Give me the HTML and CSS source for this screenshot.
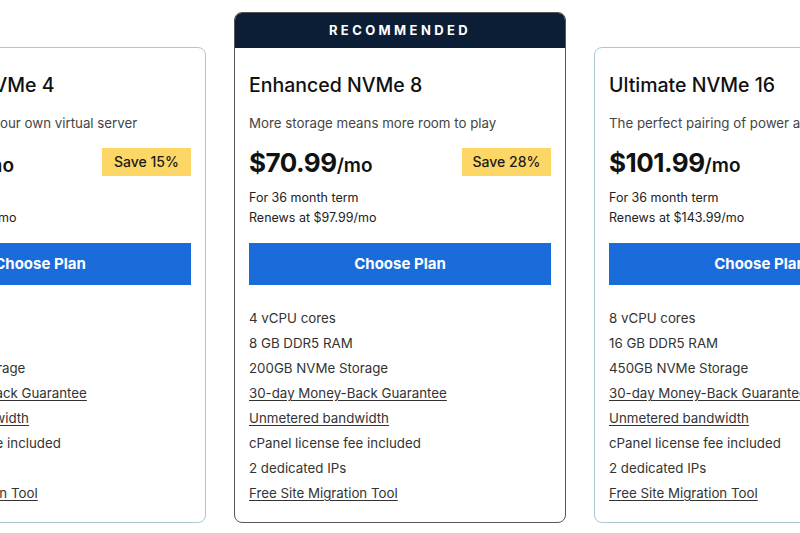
FILE: index.html
```html
<!DOCTYPE html>
<html>
<head>
<meta charset="utf-8">
<link rel="stylesheet" href="styles.css">
</head>
<body>
<div class="plans">
  <div class="card side">
    <div class="body">
      <h2 class="title">Standard NVMe 4</h2>
      <p class="sub">Get started with your own virtual server</p>
      <div class="price-row">
        <div class="price">$52.99<span class="per">/mo</span></div>
        <div class="save">Save 15%</div>
      </div>
      <p class="term">For 36 month term</p>
      <p class="term">Renews at $61.99/mo</p>
      <a class="btn">Choose Plan</a>
      <ul class="features">
        <li>2 vCPU cores</li>
        <li>4 GB DDR5 RAM</li>
        <li>100GB NVMe Storage</li>
        <li><u>30-day Money-Back Guarantee</u></li>
        <li><u>Unmetered bandwidth</u></li>
        <li>cPanel license fee included</li>
        <li>1 dedicated IP</li>
        <li><u>Free Site Migration Tool</u></li>
      </ul>
    </div>
  </div>
  <div class="card rec">
    <div class="rec-head">RECOMMENDED</div>
    <div class="body">
      <h2 class="title">Enhanced NVMe 8</h2>
      <p class="sub">More storage means more room to play</p>
      <div class="price-row">
        <div class="price">$70.99<span class="per">/mo</span></div>
        <div class="save">Save 28%</div>
      </div>
      <p class="term">For 36 month term</p>
      <p class="term">Renews at $97.99/mo</p>
      <a class="btn">Choose Plan</a>
      <ul class="features">
        <li>4 vCPU cores</li>
        <li>8 GB DDR5 RAM</li>
        <li>200GB NVMe Storage</li>
        <li><u>30-day Money-Back Guarantee</u></li>
        <li><u>Unmetered bandwidth</u></li>
        <li>cPanel license fee included</li>
        <li>2 dedicated IPs</li>
        <li><u>Free Site Migration Tool</u></li>
      </ul>
    </div>
  </div>
  <div class="card side">
    <div class="body">
      <h2 class="title">Ultimate NVMe 16</h2>
      <p class="sub">The perfect pairing of power and performance</p>
      <div class="price-row">
        <div class="price">$101.99<span class="per">/mo</span></div>
      </div>
      <p class="term">For 36 month term</p>
      <p class="term">Renews at $143.99/mo</p>
      <a class="btn">Choose Plan</a>
      <ul class="features">
        <li>8 vCPU cores</li>
        <li>16 GB DDR5 RAM</li>
        <li>450GB NVMe Storage</li>
        <li><u>30-day Money-Back Guarantee</u></li>
        <li><u>Unmetered bandwidth</u></li>
        <li>cPanel license fee included</li>
        <li>2 dedicated IPs</li>
        <li><u>Free Site Migration Tool</u></li>
      </ul>
    </div>
  </div>
</div>
</body>
</html>
```

FILE: styles.css
```css
* { box-sizing: border-box; }
html, body { margin: 0; padding: 0; background: #fff; }
body {
  width: 800px;
  height: 533px;
  overflow: hidden;
  font-family: Inter, "Open Sans", sans-serif;
  color: #222;
}
.plans {
  display: flex;
  justify-content: center;
  align-items: flex-end;
  gap: 28px;
  width: 800px;
  padding-top: 12px;
}
.card {
  flex: 0 0 332px;
  width: 332px;
  border-radius: 8px;
}
.side {
  border: 1px solid #a9c9cf;
}
.rec {
  border: 1px solid #555;
  overflow: hidden;
}
.rec-head {
  height: 35px;
  background: #0b1e36;
  color: #fff;
  font-weight: 700;
  font-size: 13px;
  letter-spacing: 3.4px;
  text-align: center;
  line-height: 35px;
}
.body {
  padding: 25px 14px 16px 14px;
}
.title {
  margin: 0;
  font-size: 19.5px;
  line-height: 24px;
  font-weight: 500;
  color: #111;
}
.sub {
  margin: 16px 0 0;
  font-size: 13.3px;
  line-height: 20px;
  color: #454545;
  white-space: nowrap;
}
.price-row {
  margin-top: 15px;
  height: 28px;
  display: flex;
  justify-content: space-between;
  align-items: center;
}
.price {
  font-size: 26px;
  font-weight: 700;
  color: #111;
  letter-spacing: -0.5px;
}
.per {
  font-size: 19px;
  font-weight: 600;
  letter-spacing: 0;
}
.save {
  background: #fdd765;
  height: 28px;
  width: 89px;
  line-height: 28px;
  text-align: center;
  font-size: 14px;
  font-weight: 500;
  color: #1a1a1a;
}
.term {
  margin: 0;
  font-size: 12.5px;
  line-height: 20px;
  color: #222;
}
.price-row + .term { margin-top: 12px; }
.btn {
  display: block;
  margin-top: 15px;
  height: 42px;
  line-height: 42px;
  background: #1a6cdb;
  color: #fff;
  text-align: center;
  font-weight: 700;
  font-size: 15px;
  white-space: nowrap;
}
.features {
  list-style: none;
  margin: 21px 0 0;
  padding: 0;
}
.features li {
  font-size: 13.3px;
  line-height: 25px;
  color: #333;
  white-space: nowrap;
}
.features u {
  text-underline-offset: 2px;
}
```
